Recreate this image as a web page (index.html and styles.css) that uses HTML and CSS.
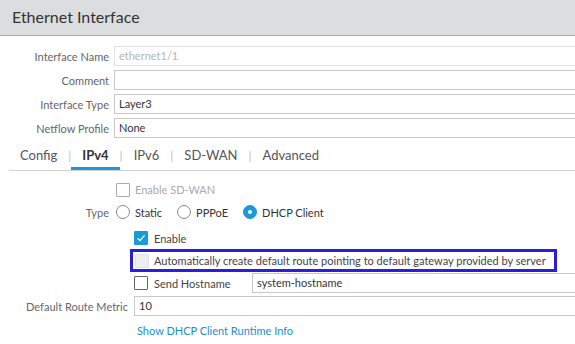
FILE: index.html
```html
<!DOCTYPE html>
<html>
<head>
    <meta charset="utf-8">
    <title>Ethernet Interface</title>
    <link rel="stylesheet" href="styles.css">
</head>
<body>
    <div class="title-bar">Ethernet Interface</div>

    <div class="form">
        <div class="row">
            <label class="lbl">Interface Name</label>
            <div class="field disabled">ethernet1/1</div>
        </div>
        <div class="row">
            <label class="lbl">Comment</label>
            <div class="field"></div>
        </div>
        <div class="row">
            <label class="lbl">Interface Type</label>
            <div class="field">Layer3</div>
        </div>
        <div class="row">
            <label class="lbl">Netflow Profile</label>
            <div class="field">None</div>
        </div>
    </div>

    <div class="tabs">
        <span class="tab">Config</span>
        <span class="sep">|</span>
        <span class="tab active">IPv4</span>
        <span class="sep">|</span>
        <span class="tab">IPv6</span>
        <span class="sep">|</span>
        <span class="tab">SD-WAN</span>
        <span class="sep">|</span>
        <span class="tab">Advanced</span>
    </div>

    <div class="ipv4">
        <div class="opt-row sdwan">
            <span class="box"></span>
            <span class="muted">Enable SD-WAN</span>
        </div>
        <div class="opt-row type">
            <label class="lbl">Type</label>
            <span class="radio"></span><span class="radio-text">Static</span>
            <span class="radio"></span><span class="radio-text">PPPoE</span>
            <span class="radio on"></span><span class="radio-text">DHCP Client</span>
        </div>
        <div class="dhcp">
            <div class="opt-row">
                <span class="box checked">
                    <svg width="10" height="10" viewBox="0 0 10 10"><path d="M1.5 5.2 L4 7.6 L8.6 2.2" fill="none" stroke="#fff" stroke-width="1.3"/></svg>
                </span>
                <span>Enable</span>
            </div>
            <div class="opt-row highlight">
                <span class="box off"></span>
                <span>Automatically create default route pointing to default gateway provided by server</span>
            </div>
            <div class="opt-row">
                <span class="box"></span>
                <span class="host-lbl">Send Hostname</span>
                <div class="field">system-hostname</div>
            </div>
        </div>
        <div class="row metric">
            <label class="lbl">Default Route Metric</label>
            <div class="field">10</div>
        </div>
        <a class="runtime" href="#">Show DHCP Client Runtime Info</a>
    </div>
</body>
</html>
```

FILE: styles.css
```css
body {
    margin: 0;
    width: 575px;
    overflow: hidden;
    font-family: Lato, "Open Sans", sans-serif;
    font-size: 11px;
    color: #333;
    background: #fff;
}
.title-bar {
    height: 35px;
    line-height: 34px;
    padding-left: 12px;
    background: #dcdddf;
    border-bottom: 1px solid #a9aaac;
    font-size: 16px;
    color: #333;
}
.form {
    padding-top: 10px;
}
.row {
    display: flex;
    align-items: center;
    height: 20px;
    margin-bottom: 4px;
}
.lbl {
    width: 109px;
    flex: none;
    text-align: right;
    color: #666;
    padding-right: 5px;
}
.field {
    flex: 1;
    height: 18px;
    line-height: 18px;
    margin-right: -10px;
    padding-left: 4px;
    border: 1px solid #c8c8c8;
    color: #333;
}
.field.disabled {
    border-color: #e2e2e2;
    color: #b5b5b5;
}
.tabs {
    display: flex;
    align-items: center;
    margin: 5px 0 0 9px;
    height: 27px;
    border-bottom: 1px solid #d0d0d0;
    font-size: 13px;
    color: #555;
}
.tab {
    padding: 0 11px;
    height: 27px;
    line-height: 25px;
    box-sizing: border-box;
}
.tab.active {
    font-weight: bold;
    color: #333;
    border-bottom: 3px solid #1a9ad6;
}
.sep {
    color: #bbb;
    font-size: 12px;
    line-height: 25px;
    height: 27px;
}
.ipv4 {
    padding-top: 11px;
}
.opt-row {
    display: flex;
    align-items: center;
    height: 22px;
}
.sdwan {
    padding-left: 116px;
    height: 15px;
    margin-bottom: 4px;
}
.type {
    height: 22px;
    margin-bottom: 7px;
}
.type .lbl {
    width: 109px;
    padding-right: 7px;
}
.box {
    width: 12px;
    height: 12px;
    flex: none;
    border: 1px solid #666;
    border-radius: 1px;
    margin-right: 6px;
    display: flex;
    align-items: center;
    justify-content: center;
}
.sdwan .box {
    border-color: #aaa;
    margin-right: 5px;
}
.muted {
    color: #aaa;
}
.box.checked {
    background: #1a9ad6;
    border-color: #1a9ad6;
}
.box.off {
    background: #eee;
    border-color: #d8e4ee;
}
.radio {
    width: 12px;
    height: 12px;
    flex: none;
    border: 1px solid #888;
    border-radius: 50%;
    margin-right: 5px;
    position: relative;
}
.radio.on {
    background: #1a9ad6;
    border-color: #1a9ad6;
}
.radio.on::after {
    content: "";
    position: absolute;
    left: 4px;
    top: 4px;
    width: 4px;
    height: 4px;
    border-radius: 50%;
    background: #fff;
}
.radio-text {
    margin-right: 15px;
}
.dhcp {
    padding-left: 134px;
}
.dhcp .opt-row {
    color: #444;
    white-space: nowrap;
}
.dhcp .opt-row:first-child {
    height: 16px;
    margin-bottom: 3px;
}
.highlight {
    margin-left: -4px;
    padding-left: 2px;
    width: 419px;
    height: 17px;
    border: 3px solid #2b1de0;
}
.highlight .box {
    margin-right: 5px;
}
.dhcp .opt-row:last-child {
    height: 20px;
    margin-top: 1px;
}
.host-lbl {
    width: 98px;
    flex: none;
}
.metric {
    margin-top: 3px;
}
.metric .lbl {
    width: 128px;
    padding-right: 6px;
}
.runtime {
    display: block;
    margin: 8px 0 0 137px;
    color: #1a8fd0;
    text-decoration: none;
}
```
